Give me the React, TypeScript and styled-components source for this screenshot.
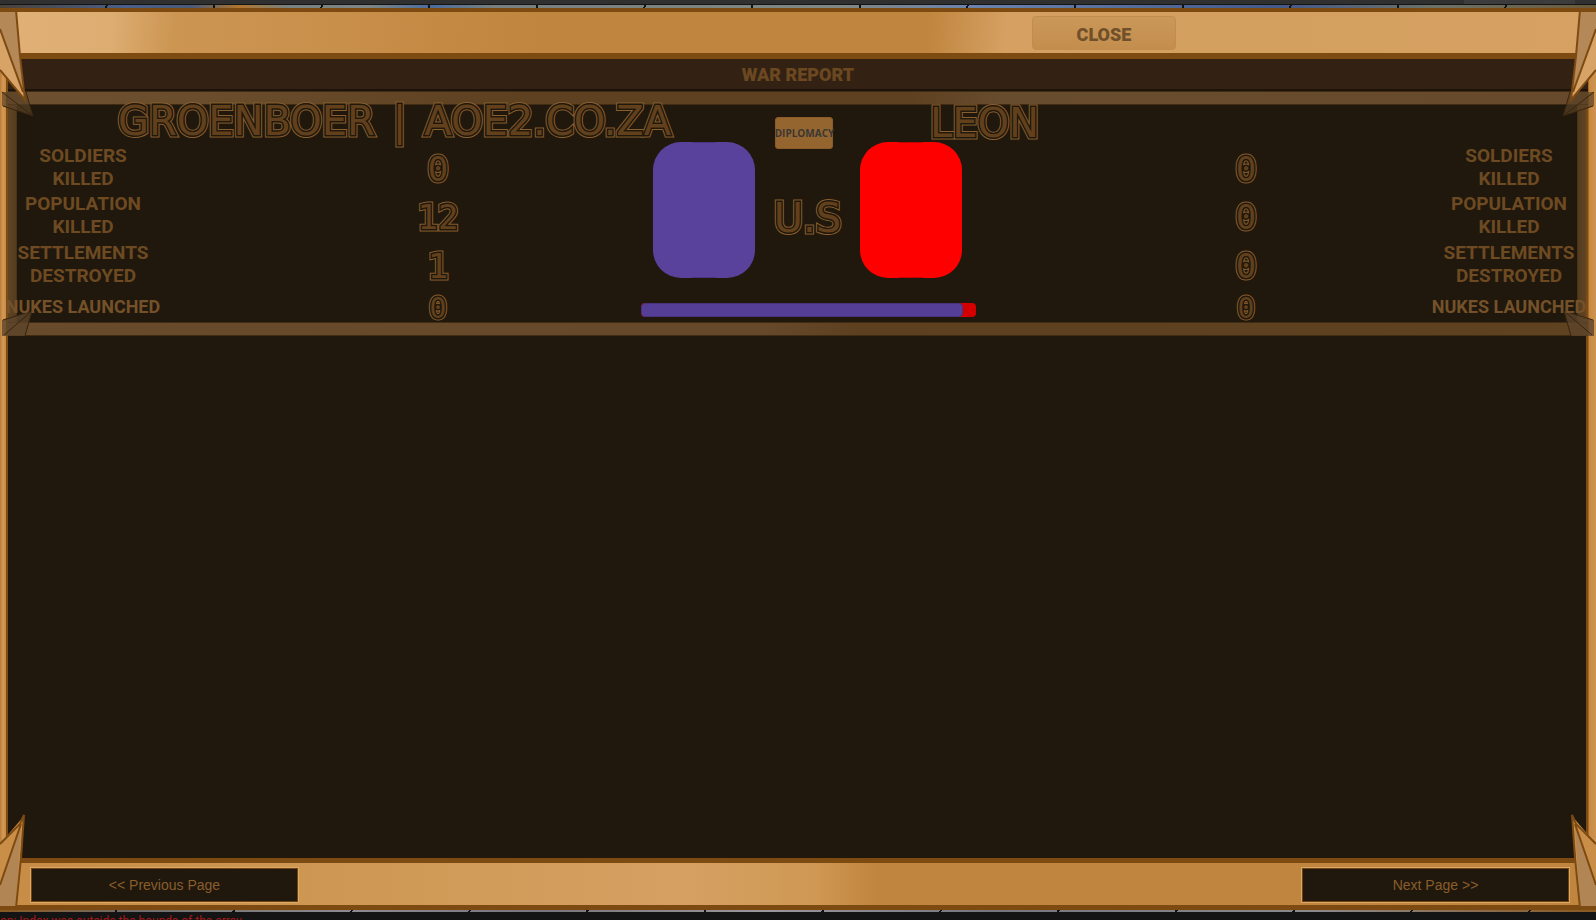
import React from "react";
import styled, { createGlobalStyle, css } from "styled-components";

const ink = "#20180d";
const edge = "#7d4a12";
const bronze = "#8a5d2c";
const bronzeDim = "#62401c";

const GlobalStyle = createGlobalStyle`
  * { box-sizing: border-box; }
  body { margin: 0; background: ${ink}; overflow: hidden; }
  button { font: inherit; cursor: pointer; }
`;

const Page = styled.div`
  display: flex;
  flex-direction: column;
  min-height: 100vh;
  font-family: Roboto, "Liberation Sans", sans-serif;
  background: ${ink};
`;

const Toolbar = styled.div`
  height: 5px;
  background: linear-gradient(90deg, transparent 1464px, #3c3c3c 1464px, #3c3c3c 1575px, transparent 1575px), #303030;
  border-bottom: 1px solid #151515;
`;

const MapSlice = styled.div<{ $tone: "sea" | "rock" }>`
  height: ${(p) => (p.$tone === "sea" ? 3 : 2)}px;
  background: ${(p) =>
    p.$tone === "sea"
      ? css`repeating-linear-gradient(100deg, transparent 0 104px, #111 104px 106px),
          linear-gradient(90deg, #4a4238 0, #49608a 8%, #4a5a78 12%, #b0762c 15%, #77817f 18%, #7d8684 23%, #4b6d9e 27%, #77807f 31%, #808785 53%, #6a83ad 61%, #42598a 80%, #6d7266 90%, #6b5a3a 100%)`
      : css`repeating-linear-gradient(120deg, transparent 0 100px, #111 100px 102px),
          linear-gradient(90deg, #8a5a22 0, #6f6a68 8%, #8d8b8e 22%, #77757a 34%, #9b989c 48%, #77757a 62%, #8c898d 82%, #8a5a22 100%)`};
`;

const Frame = styled.main`
  position: relative;
  flex: 1;
  display: flex;
  flex-direction: column;
  background: linear-gradient(90deg, #b97d38 0, #d59a56 3px, #c68a44 6px, ${edge} 6px, ${edge} 8px, ${ink} 8px, ${ink} calc(100% - 10px), ${edge} calc(100% - 10px), ${edge} calc(100% - 8px), #c68a44 calc(100% - 7px), #cf9450 100%);
`;

const TopBar = styled.header`
  display: flex;
  height: 51px;
  padding: 4px 0;
  border-top: 4px solid ${edge};
  border-bottom: 6px solid ${edge};
  background: linear-gradient(95deg, #e0b076 0, #ddad72 7%, #cc9552 11%, #c88f4a 22%, #c0853e 34%, #c0853e 58%, #d5a062 63%, #d3a05f 74%, #d6a162 100%);
`;

const CloseButton = styled.button`
  width: 144px;
  height: 34px;
  margin-left: 64.66%;
  padding: 3px 0 0;
  border: 1px solid #bf8d4e;
  border-radius: 4px;
  background: linear-gradient(180deg, #cb9859, #c38d4d);
  color: #70502a;
  font-size: 18px;
  font-weight: 900;
  line-height: 18px;
`;

const TitleStrip = styled.h1`
  margin: 0 8px;
  height: 32px;
  background: #332214;
  border-bottom: 2px solid #1c130a;
  color: #6b4820;
  font-size: 18px;
  font-weight: 900;
  line-height: 32px;
  text-align: center;
`;

const bandTop = "linear-gradient(90deg, #6c5030, #694d2d 12%, #5d4121 32%, #5d4121 57%, #674c2d 63%, #664a2b)";
const bandBottom = "linear-gradient(90deg, #684b2b, #65492a 48%, #5c4020 54%, #5f4220)";
const line = "linear-gradient(#412b13, #412b13)";

const Report = styled.section`
  position: relative;
  isolation: isolate;
  display: grid;
  grid-template-columns: minmax(0, 641fr) 335px minmax(0, 620fr);
  grid-template-rows: 38px auto;
  height: 245px;
  padding: 14px 0 10px;
  background:
    ${line} 8px 0 / calc(100% - 16px) 1px no-repeat,
    ${line} 8px 13px / calc(100% - 16px) 1px no-repeat,
    ${line} 8px 231px / calc(100% - 16px) 1px no-repeat,
    ${line} 8px 244px / calc(100% - 16px) 1px no-repeat,
    ${bandTop} 8px 0 / calc(100% - 16px) 14px no-repeat,
    ${bandBottom} 8px 231px / calc(100% - 16px) 14px no-repeat,
    linear-gradient(90deg, #5f4525, #553c1e 8px, #3f2b14 9px) 8px 0 / 9px 100% no-repeat,
    linear-gradient(270deg, #5f4525, #553c1e 8px, #3f2b14 9px) calc(100% - 10px) 0 / 9px 100% no-repeat;
`;

const Engraved = styled.span<{ $size: number; $mono?: boolean }>`
  position: relative;
  display: inline-block;
  font-family: ${(p) => (p.$mono ? `"DejaVu Sans Mono", monospace` : `"DejaVu Sans", sans-serif`)};
  font-size: ${(p) => p.$size}px;
  font-weight: 400;
  line-height: ${(p) => p.$size - 8}px;
  white-space: pre;
  color: ${bronze};
  -webkit-text-stroke: 5px ${bronze};

  &::before,
  &::after {
    content: attr(data-text);
    position: absolute;
    inset: 0;
  }

  &::before {
    color: ${ink};
    -webkit-text-stroke: 3px ${ink};
  }

  &::after {
    color: ${bronzeDim};
    -webkit-text-stroke: 0;
  }
`;

const NationName = styled.h2<{ $side: "left" | "right" }>`
  display: flex;
  gap: 18px;
  margin: 0;
  grid-row: 1;
  grid-column: ${(p) => (p.$side === "left" ? "1 / 3" : "2 / 4")};
  padding-left: ${(p) => (p.$side === "left" ? 118 : 289)}px;
  padding-top: ${(p) => (p.$side === "left" ? 0 : 2)}px;
`;

const Stats = styled.table<{ $side: "left" | "right" }>`
  grid-row: 2;
  grid-column: ${(p) => (p.$side === "left" ? 1 : 3)};
  width: 100%;
  height: 183px;
  border-collapse: collapse;
  table-layout: fixed;
`;

const LabelCell = styled.th<{ $small?: boolean; $side: "left" | "right" }>`
  width: ${(p) => (p.$side === "left" ? 166 : 174)}px;
  height: ${(p) => (p.$small ? 38 : 48)}px;
  padding: 0;
  color: ${(p) => (p.$small ? "#745129" : "#6d4a21")};
  font-size: ${(p) => (p.$small ? 18 : 19)}px;
  font-weight: 700;
  line-height: 23px;
  text-align: center;
  white-space: nowrap;
`;

const ValueCell = styled.td<{ $side: "left" | "right" }>`
  padding: 4px 0 0 ${(p) => (p.$side === "left" ? 69 : 94)}px;
  line-height: 0;
  text-align: center;
`;

const Versus = styled.div`
  grid-row: 1 / 3;
  grid-column: 2;
  display: flex;
  flex-direction: column;
  justify-content: space-between;
  padding: 12px 0 9px;
`;

const Contenders = styled.div`
  display: flex;
  justify-content: space-between;
  padding: 0 14px 0 12px;
`;

const Banner = styled.div<{ $color: string; $notch: string }>`
  width: 102px;
  height: 136px;
  margin-top: 25px;
  border-radius: 28px;
  background:
    linear-gradient(${(p) => p.$notch}, ${(p) => p.$notch}) 39px 0 / 24px 1px no-repeat,
    linear-gradient(${(p) => p.$notch}, ${(p) => p.$notch}) 39px 100% / 24px 1px no-repeat,
    ${(p) => p.$color};
`;

const Middle = styled.div`
  display: flex;
  flex-direction: column;
  align-items: center;
  gap: 53px;
`;

const DiplomacyButton = styled.button`
  display: flex;
  align-items: center;
  justify-content: center;
  width: 58px;
  height: 32px;
  margin-right: 6px;
  padding: 0;
  border: 1px solid #8a5c28;
  border-radius: 3px;
  background: #95652f;
  color: #3a3735;
  font-family: "Open Sans", sans-serif;
  font-size: 10px;
  font-weight: 700;
  white-space: nowrap;
`;

const ScoreBar = styled.div`
  display: flex;
  height: 14px;
  border-radius: 4px;
  overflow: hidden;
  background: #d40000;
`;

const ScoreFill = styled.div`
  border: 1px solid #49337f;
  border-radius: 4px;
  background: #553e96;
`;

const Body = styled.div`
  flex: 1;
`;

const BottomBar = styled.nav`
  display: flex;
  justify-content: space-between;
  height: 52px;
  padding: 5px 27px 3px 31px;
  border-top: 5px solid ${edge};
  border-bottom: 5px solid ${edge};
  background: linear-gradient(90deg, #c78c45 0, #cf9955 24%, #d5a062 43%, #cf9853 51%, #c0853e 55%, #c0853e 100%);
`;

const PageButton = styled.button`
  width: 267px;
  height: 34px;
  border: 1px solid #6f4312;
  outline: 1px solid #dba868;
  background: ${ink};
  color: #8a5d2b;
  font-family: "Liberation Sans", sans-serif;
  font-size: 14px;
`;

const Corner = styled.svg<{ $at: "tl" | "tr" | "bl" | "br" }>`
  position: absolute;
  ${(p) => (p.$at[0] === "t" ? "top: 0;" : "bottom: 0;")}
  ${(p) => (p.$at[1] === "l" ? "left: 0;" : "right: 0; transform: scaleX(-1);")}
  pointer-events: none;
`;

const PanelCorner = styled.svg<{ $side: "left" | "right" }>`
  position: absolute;
  z-index: -1;
  bottom: 0;
  ${(p) => (p.$side === "left" ? "left: 0;" : "right: 0; transform: scaleX(-1);")}
`;

const Console = styled.div`
  height: 8px;
  padding: 3px 0 0;
  overflow: hidden;
  background: #141414;
  color: #a31818;
  font-family: Roboto, sans-serif;
  font-size: 12px;
  line-height: 13px;
  white-space: nowrap;
`;

function Engraving({ text, size, mono }: { text: string; size: number; mono?: boolean }) {
  return (
    <Engraved $size={size} $mono={mono} data-text={text}>
      {text}
    </Engraved>
  );
}

function TopCorner({ at }: { at: "tl" | "tr" }) {
  return (
    <Corner $at={at} width="36" height="112" viewBox="0 0 36 112" aria-hidden="true">
      <path d="M2 84 L25 84 L33 108 L2 98Z" fill="#5a4127" fillOpacity="0.7" />
      <path d="M2 84 L33 108 M3 98 L33 108 M26 84 L33 108" stroke="#38240f" fill="none" />
      <path d="M0 2 L16 2 L20 48 L25 92 L0 62Z" fill="#d7a366" />
      <path d="M0 2 L16 2 L23 84 L0 22Z" fill="#b48857" />
      <path d="M16 2 L20 48 L25 92 L0 62 M0 21 L23 84" stroke={edge} strokeWidth="2" fill="none" />
      <path d="M0 2 H18" stroke={edge} strokeWidth="4" />
    </Corner>
  );
}

function BottomCorner({ at }: { at: "bl" | "br" }) {
  return (
    <Corner $at={at} width="36" height="96" viewBox="0 0 36 96" aria-hidden="true">
      <path d="M0 30 L24 2 L16 94 L0 94Z" fill="#c98e48" />
      <path d="M0 72 L21 12 L16 92 L0 92Z" fill="#b18654" />
      <path d="M0 30 L20 10 L24 1 L21 44 L16 94 M0 71 L21 10" stroke={edge} strokeWidth="2" fill="none" />
      <path d="M0 94 H18" stroke={edge} strokeWidth="4" />
    </Corner>
  );
}

function PanelFoot({ side }: { side: "left" | "right" }) {
  return (
    <PanelCorner $side={side} width="36" height="26" viewBox="0 0 36 26" aria-hidden="true">
      <path d="M2 10 L32 1 L25 26 L2 26Z" fill="#5c452c" fillOpacity="0.8" />
      <path d="M3 10 L32 1 L4 25 M32 1 L25 26" stroke="#38240f" fill="none" />
    </PanelCorner>
  );
}

const rows = [
  { label: ["SOLDIERS", "KILLED"], left: "0", right: "0" },
  { label: ["POPULATION", "KILLED"], left: "12", right: "0" },
  { label: ["SETTLEMENTS", "DESTROYED"], left: "1", right: "0" },
  { label: ["NUKES LAUNCHED"], left: "0", right: "0" },
];

function StatTable({ side }: { side: "left" | "right" }) {
  return (
    <Stats $side={side}>
      <tbody>
        {rows.map((row) => {
          const small = row.label.length === 1;
          const label = (
            <LabelCell scope="row" $small={small} $side={side}>
              {row.label[0]}
              {!small && <br />}
              {row.label[1]}
            </LabelCell>
          );
          const value = (
            <ValueCell $side={side}>
              <Engraving text={row[side]} size={small ? 28 : 34} mono />
            </ValueCell>
          );
          return (
            <tr key={row.label.join(" ")}>
              {side === "left" ? label : value}
              {side === "left" ? value : label}
            </tr>
          );
        })}
      </tbody>
    </Stats>
  );
}

export default function App() {
  const share = 96;
  return (
    <Page>
      <GlobalStyle />
      <Toolbar />
      <MapSlice $tone="sea" />
      <Frame>
        <TopBar>
          <CloseButton type="button">CLOSE</CloseButton>
        </TopBar>
        <TitleStrip>WAR REPORT</TitleStrip>
        <Report>
          <PanelFoot side="left" />
          <PanelFoot side="right" />
          <NationName $side="left">
            <Engraving text="GROENBOER" size={40} />
            <Engraving text="|" size={40} />
            <Engraving text="AOE2.CO.ZA" size={40} />
          </NationName>
          <NationName $side="right">
            <Engraving text="LEON" size={40} />
          </NationName>
          <StatTable side="left" />
          <Versus>
            <Contenders>
              <Banner $color="#58429b" $notch="#4a3580" />
              <Middle>
                <DiplomacyButton type="button">DIPLOMACY</DiplomacyButton>
                <Engraving text="U.S" size={40} />
              </Middle>
              <Banner $color="#ff0000" $notch="#c00000" />
            </Contenders>
            <ScoreBar>
              <ScoreFill style={{ width: `${share}%` }} />
            </ScoreBar>
          </Versus>
          <StatTable side="right" />
        </Report>
        <Body />
        <BottomBar>
          <PageButton type="button">&lt;&lt; Previous Page</PageButton>
          <PageButton type="button">Next Page &gt;&gt;</PageButton>
        </BottomBar>
        <TopCorner at="tl" />
        <TopCorner at="tr" />
        <BottomCorner at="bl" />
        <BottomCorner at="br" />
      </Frame>
      <MapSlice $tone="rock" />
      <Console>on: Index was outside the bounds of the array.</Console>
    </Page>
  );
}
